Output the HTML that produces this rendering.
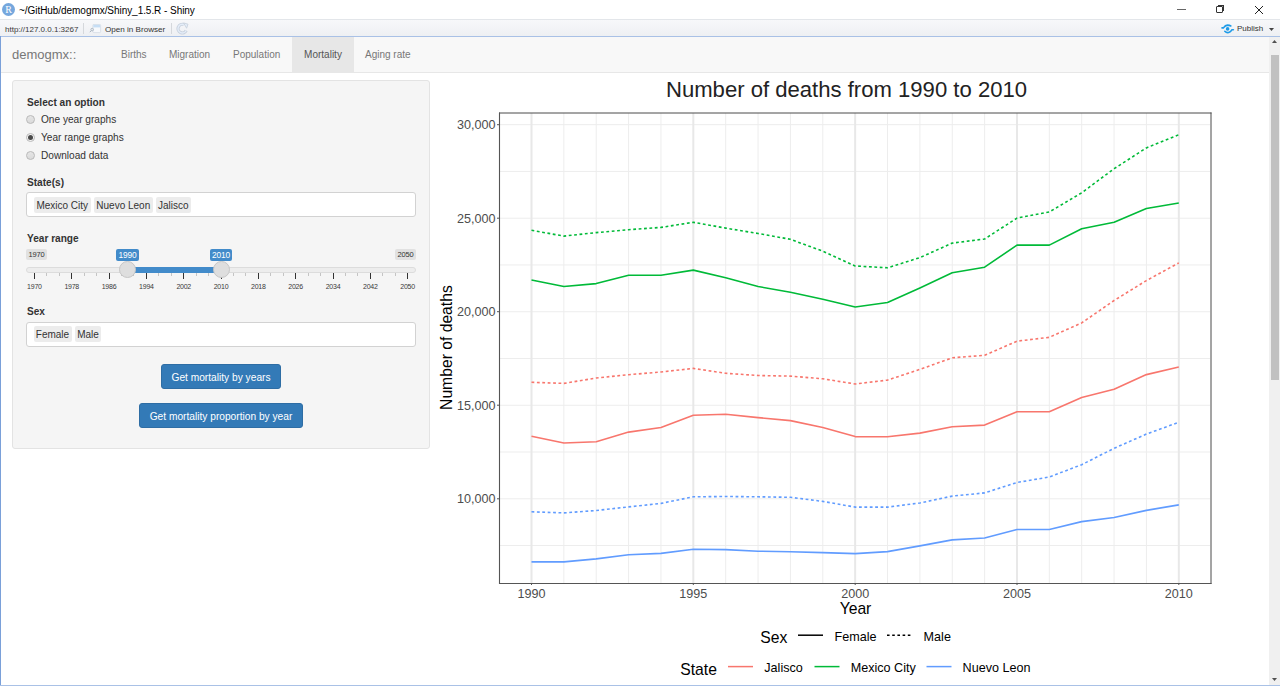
<!DOCTYPE html>
<html><head><meta charset="utf-8">
<style>
*{margin:0;padding:0;box-sizing:border-box}
html,body{width:1280px;height:686px;overflow:hidden;background:#fff;font-family:"Liberation Sans",sans-serif;color:#333}
.a{position:absolute;white-space:nowrap}
#titlebar{position:absolute;left:0;top:0;width:1280px;height:19px;background:#fff}
#toolbar{position:absolute;left:0;top:19px;width:1280px;height:17px;background:linear-gradient(#f7f8fa,#eef0f3);border-top:1px solid #e3e6ea}
#blueline{position:absolute;left:0;top:36px;width:1280px;height:1px;background:#a9c1e6}
#leftline{position:absolute;left:0;top:36px;width:1px;height:650px;background:#7aa0d9}
#bottomline{position:absolute;left:0;top:685px;width:1280px;height:1px;background:#a9c1e6}
#navbar{position:absolute;left:1px;top:37px;width:1269px;height:36px;background:#f8f8f8;border-bottom:1px solid #e7e7e7}
.nav{position:absolute;top:0;height:35px;font-size:10px;color:#777;line-height:35px}
#well{position:absolute;left:12px;top:80px;width:418px;height:369px;background:#f5f5f5;border:1px solid #e3e3e3;border-radius:3px}
.lbl{position:absolute;font-size:10.1px;font-weight:bold;color:#333}
.radio{position:absolute;width:9px;height:9px;border-radius:50%;border:1px solid #b9b9b9;background:linear-gradient(#e6e6e6,#dadada)}
.rtxt{position:absolute;font-size:10.1px;color:#333}
.inp{position:absolute;background:#fff;border:1px solid #d2d2d2;border-radius:3px}
.chip{position:absolute;background:#ececec;border-radius:2px;font-size:10px;color:#333;line-height:17px;height:16px;padding:0;text-align:center;overflow:visible}
.btn{position:absolute;background:#337ab7;border:1px solid #2e6da4;border-radius:3px;color:#fff;font-size:10.2px;text-align:center}
#scroll{position:absolute;left:1269px;top:37px;width:11px;height:648px;background:#f0f0f0}
#thumb{position:absolute;left:1271px;top:55px;width:8px;height:325px;background:#c1c1c1}
.tick{position:absolute;width:1px;background:#333}
.mtick{position:absolute;width:1px;background:#c4c4c4}
.glab{position:absolute;font-size:7px;letter-spacing:-0.25px;color:#3a3a3a;text-align:center;width:30px;line-height:9px}
</style></head><body>
<div id="titlebar">
  <div class="a" style="left:2px;top:3px;width:13px;height:13px;border-radius:50%;background:#75a7dd;color:#fff;font-family:'Liberation Serif',serif;font-size:10px;line-height:13px;text-align:center">R</div>
  <div class="a" style="left:19px;top:4px;font-size:10px;letter-spacing:-0.05px;color:#000;line-height:13px">~/GitHub/demogmx/Shiny_1.5.R - Shiny</div>
  <div class="a" style="left:1177px;top:8.5px;width:9px;height:1px;background:#666"></div>
  <div class="a" style="left:1216px;top:6px;width:7px;height:7px;border:1px solid #333;border-radius:1px"></div>
  <div class="a" style="left:1218px;top:5px;width:6px;height:6px;border-top:1px solid #333;border-right:1px solid #333"></div>
  <svg class="a" style="left:1254px;top:5px" width="10" height="10"><path d="M1 1L9 9M9 1L1 9" stroke="#222" stroke-width="1"/></svg>
</div>
<div id="toolbar">
  <div class="a" style="left:5px;top:5px;font-size:8px;color:#3a3a3a;line-height:10px">http://127.0.0.1:3267</div>
  <div class="a" style="left:83px;top:3px;width:1px;height:11px;background:#d5d8dc"></div>
  <svg class="a" style="left:89px;top:4px" width="13" height="11"><rect x="3.9" y="0.4" width="7.7" height="8.2" rx="1" fill="#f7f9fc" stroke="#d3dae3" stroke-width="0.8"/><rect x="4.3" y="0.8" width="6.9" height="2.6" fill="#c6def5"/><circle cx="3.2" cy="5.6" r="1.3" fill="none" stroke="#a9b4c0" stroke-width="0.9"/><path d="M2.3 6.6 L0.8 8.2" stroke="#a9b4c0" stroke-width="1"/></svg>
  <div class="a" style="left:105px;top:5px;font-size:8.1px;color:#333;line-height:10px">Open in Browser</div>
  <div class="a" style="left:171px;top:3px;width:1px;height:11px;background:#d5d8dc"></div>
  <svg class="a" style="left:176px;top:2px" width="14" height="14"><path d="M7.8 2.6 A4.3 4.3 0 1 0 10.2 8.5" fill="none" stroke="#c9d2de" stroke-width="3.2"/><path d="M7.8 2.6 A4.3 4.3 0 1 0 10.2 8.5" fill="none" stroke="#e4edf9" stroke-width="1.4"/><path d="M7.6 0.9 L12 2.2 L10.6 6.2 Z" fill="#e4edf9" stroke="#c9d2de" stroke-width="0.9"/></svg>
  <svg class="a" style="left:1221px;top:2px" width="14" height="14"><path d="M1 5.9 H2.4 Q4.3 3.2 6.5 3.1 Q8.6 3.1 9.8 4" fill="none" stroke="#1e9be8" stroke-width="1.6" stroke-linecap="round"/><path d="M3.8 9.3 Q5.5 11 7.6 10.5 Q9.6 9.9 10.9 7.8 H12.4" fill="none" stroke="#1e9be8" stroke-width="1.6" stroke-linecap="round"/><circle cx="6.6" cy="6.9" r="1.8" fill="#1e9be8"/></svg>
  <div class="a" style="left:1237px;top:4px;font-size:8px;color:#333;line-height:10px">Publish</div>
  <svg class="a" style="left:1269px;top:8px" width="6" height="4"><path d="M0 0H5L2.5 3Z" fill="#444"/></svg>
</div>
<div id="blueline"></div>
<div id="navbar">
  <div class="nav" style="left:11px;font-size:13px">demogmx::</div>
  <div class="nav" style="left:120px">Births</div>
  <div class="nav" style="left:168px">Migration</div>
  <div class="nav" style="left:232px">Population</div>
  <div class="nav" style="left:291px;width:62px;background:#e7e7e7;color:#555;text-align:center">Mortality</div>
  <div class="nav" style="left:364px">Aging rate</div>
</div>
<div id="leftline"></div>

<div id="well"></div>
<div class="lbl" style="left:27px;top:97px">Select an option</div>
<div class="radio" style="left:26px;top:115px"></div>
<div class="rtxt" style="left:41px;top:114px">One year graphs</div>
<div class="radio" style="left:26px;top:133px;background:#f4f4f4"></div>
<div class="a" style="left:28px;top:135px;width:5px;height:5px;border-radius:50%;background:#4a4a4a"></div>
<div class="rtxt" style="left:41px;top:132px">Year range graphs</div>
<div class="radio" style="left:26px;top:151px"></div>
<div class="rtxt" style="left:41px;top:150px">Download data</div>

<div class="lbl" style="left:27px;top:177px">State(s)</div>
<div class="inp" style="left:26px;top:192px;width:390px;height:25px"></div>
<div class="chip" style="left:33.5px;top:196.5px;width:57.5px">Mexico City</div>
<div class="chip" style="left:93.5px;top:196.5px;width:59.5px">Nuevo Leon</div>
<div class="chip" style="left:155.5px;top:196.5px;width:35.5px">Jalisco</div>

<div class="lbl" style="left:27px;top:233px">Year range</div>
<!-- slider -->
<div class="a" style="left:26px;top:249px;width:21px;height:11px;background:#e1e1e1;border-radius:2px;font-size:7.5px;letter-spacing:-0.2px;line-height:11px;text-align:center;color:#333">1970</div>
<div class="a" style="left:395px;top:249px;width:21px;height:11px;background:#e1e1e1;border-radius:2px;font-size:7.5px;letter-spacing:-0.2px;line-height:11px;text-align:center;color:#333">2050</div>
<div class="a" style="left:26px;top:267px;width:390px;height:6px;background:#ededed;border:1px solid #dcdcdc;border-radius:3px"></div>
<div class="a" style="left:128px;top:267px;width:93px;height:6px;background:#428bca"></div>
<div class="a" style="left:116px;top:249px;width:23px;height:12px;background:#428bca;border-radius:2px;font-size:8.4px;letter-spacing:-0.2px;line-height:12px;text-align:center;color:#fff">1990</div>
<div class="a" style="left:210px;top:249px;width:22px;height:12px;background:#428bca;border-radius:2px;font-size:8.4px;letter-spacing:-0.2px;line-height:12px;text-align:center;color:#fff">2010</div>
<div class="tick" style="left:33.9px;top:273px;height:6px"></div>
<div class="glab" style="left:19.4px;top:282px">1970</div>
<div class="mtick" style="left:46.3px;top:273px;height:3px"></div>
<div class="mtick" style="left:58.8px;top:273px;height:3px"></div>
<div class="tick" style="left:71.2px;top:273px;height:6px"></div>
<div class="glab" style="left:56.7px;top:282px">1978</div>
<div class="mtick" style="left:83.7px;top:273px;height:3px"></div>
<div class="mtick" style="left:96.1px;top:273px;height:3px"></div>
<div class="tick" style="left:108.5px;top:273px;height:6px"></div>
<div class="glab" style="left:94.0px;top:282px">1986</div>
<div class="mtick" style="left:121.0px;top:273px;height:3px"></div>
<div class="mtick" style="left:133.4px;top:273px;height:3px"></div>
<div class="tick" style="left:145.9px;top:273px;height:6px"></div>
<div class="glab" style="left:131.4px;top:282px">1994</div>
<div class="mtick" style="left:158.3px;top:273px;height:3px"></div>
<div class="mtick" style="left:170.7px;top:273px;height:3px"></div>
<div class="tick" style="left:183.2px;top:273px;height:6px"></div>
<div class="glab" style="left:168.7px;top:282px">2002</div>
<div class="mtick" style="left:195.6px;top:273px;height:3px"></div>
<div class="mtick" style="left:208.1px;top:273px;height:3px"></div>
<div class="tick" style="left:220.5px;top:273px;height:6px"></div>
<div class="glab" style="left:206.0px;top:282px">2010</div>
<div class="mtick" style="left:232.9px;top:273px;height:3px"></div>
<div class="mtick" style="left:245.4px;top:273px;height:3px"></div>
<div class="tick" style="left:257.8px;top:273px;height:6px"></div>
<div class="glab" style="left:243.3px;top:282px">2018</div>
<div class="mtick" style="left:270.3px;top:273px;height:3px"></div>
<div class="mtick" style="left:282.7px;top:273px;height:3px"></div>
<div class="tick" style="left:295.1px;top:273px;height:6px"></div>
<div class="glab" style="left:280.6px;top:282px">2026</div>
<div class="mtick" style="left:307.6px;top:273px;height:3px"></div>
<div class="mtick" style="left:320.0px;top:273px;height:3px"></div>
<div class="tick" style="left:332.5px;top:273px;height:6px"></div>
<div class="glab" style="left:318.0px;top:282px">2034</div>
<div class="mtick" style="left:344.9px;top:273px;height:3px"></div>
<div class="mtick" style="left:357.3px;top:273px;height:3px"></div>
<div class="tick" style="left:369.8px;top:273px;height:6px"></div>
<div class="glab" style="left:355.3px;top:282px">2042</div>
<div class="mtick" style="left:382.2px;top:273px;height:3px"></div>
<div class="mtick" style="left:394.7px;top:273px;height:3px"></div>
<div class="tick" style="left:407.1px;top:273px;height:6px"></div>
<div class="glab" style="left:392.6px;top:282px">2050</div>
<div class="a" style="left:119px;top:261px;width:17px;height:17px;border-radius:50%;background:#dedede;border:1px solid #c6c6c6"></div>
<div class="a" style="left:213px;top:261px;width:17px;height:17px;border-radius:50%;background:#dedede;border:1px solid #c6c6c6"></div>

<div class="lbl" style="left:27px;top:306px">Sex</div>
<div class="inp" style="left:26px;top:322px;width:390px;height:25px"></div>
<div class="chip" style="left:33.5px;top:326px;width:38px">Female</div>
<div class="chip" style="left:75px;top:326px;width:26px">Male</div>

<div class="btn" style="left:161px;top:364px;width:120px;height:25px;line-height:25px">Get mortality by years</div>
<div class="btn" style="left:139px;top:403px;width:164px;height:25px;line-height:25px">Get mortality proportion by year</div>

<svg width="1280" height="686" style="position:absolute;left:0;top:0">
<rect x="500" y="113" width="711" height="470" fill="#fff"/>
<line x1="500" x2="1210" y1="545.54" y2="545.54" stroke="#EDEDED" stroke-width="1"/>
<line x1="500" x2="1210" y1="498.78" y2="498.78" stroke="#EDEDED" stroke-width="1"/>
<line x1="500" x2="1210" y1="452.01" y2="452.01" stroke="#EDEDED" stroke-width="1"/>
<line x1="500" x2="1210" y1="405.25" y2="405.25" stroke="#EDEDED" stroke-width="1"/>
<line x1="500" x2="1210" y1="358.49" y2="358.49" stroke="#EDEDED" stroke-width="1"/>
<line x1="500" x2="1210" y1="311.72" y2="311.72" stroke="#EDEDED" stroke-width="1"/>
<line x1="500" x2="1210" y1="264.96" y2="264.96" stroke="#EDEDED" stroke-width="1"/>
<line x1="500" x2="1210" y1="218.19" y2="218.19" stroke="#EDEDED" stroke-width="1"/>
<line x1="500" x2="1210" y1="171.43" y2="171.43" stroke="#EDEDED" stroke-width="1"/>
<line x1="500" x2="1210" y1="124.66" y2="124.66" stroke="#EDEDED" stroke-width="1"/>
<line x1="531.50" x2="531.50" y1="113" y2="583" stroke="#E8E8E8" stroke-width="2"/>
<line x1="563.87" x2="563.87" y1="113" y2="583" stroke="#EDEDED" stroke-width="1"/>
<line x1="596.23" x2="596.23" y1="113" y2="583" stroke="#EDEDED" stroke-width="1"/>
<line x1="628.60" x2="628.60" y1="113" y2="583" stroke="#EDEDED" stroke-width="1"/>
<line x1="660.96" x2="660.96" y1="113" y2="583" stroke="#EDEDED" stroke-width="1"/>
<line x1="693.33" x2="693.33" y1="113" y2="583" stroke="#E8E8E8" stroke-width="2"/>
<line x1="725.69" x2="725.69" y1="113" y2="583" stroke="#EDEDED" stroke-width="1"/>
<line x1="758.06" x2="758.06" y1="113" y2="583" stroke="#EDEDED" stroke-width="1"/>
<line x1="790.42" x2="790.42" y1="113" y2="583" stroke="#EDEDED" stroke-width="1"/>
<line x1="822.79" x2="822.79" y1="113" y2="583" stroke="#EDEDED" stroke-width="1"/>
<line x1="855.15" x2="855.15" y1="113" y2="583" stroke="#E8E8E8" stroke-width="2"/>
<line x1="887.52" x2="887.52" y1="113" y2="583" stroke="#EDEDED" stroke-width="1"/>
<line x1="919.88" x2="919.88" y1="113" y2="583" stroke="#EDEDED" stroke-width="1"/>
<line x1="952.25" x2="952.25" y1="113" y2="583" stroke="#EDEDED" stroke-width="1"/>
<line x1="984.61" x2="984.61" y1="113" y2="583" stroke="#EDEDED" stroke-width="1"/>
<line x1="1016.98" x2="1016.98" y1="113" y2="583" stroke="#E8E8E8" stroke-width="2"/>
<line x1="1049.34" x2="1049.34" y1="113" y2="583" stroke="#EDEDED" stroke-width="1"/>
<line x1="1081.70" x2="1081.70" y1="113" y2="583" stroke="#EDEDED" stroke-width="1"/>
<line x1="1114.07" x2="1114.07" y1="113" y2="583" stroke="#EDEDED" stroke-width="1"/>
<line x1="1146.43" x2="1146.43" y1="113" y2="583" stroke="#EDEDED" stroke-width="1"/>
<line x1="1178.80" x2="1178.80" y1="113" y2="583" stroke="#E8E8E8" stroke-width="2"/>
<polyline points="531.5,230.3 563.9,236.1 596.2,232.6 628.6,229.7 661.0,227.4 693.3,222.3 725.7,228.1 758.1,233.5 790.4,239.3 822.8,251.2 855.2,266.0 887.5,267.8 919.9,257.6 952.2,243.1 984.6,239.0 1017.0,218.1 1049.3,212.0 1081.7,192.8 1114.1,168.7 1146.4,147.9 1178.8,134.7" fill="none" stroke="#00BA38" stroke-width="1.6" stroke-linejoin="round" stroke-dasharray="2.8 2.6"/>
<polyline points="531.5,280.0 563.9,286.5 596.2,283.6 628.6,275.2 661.0,275.2 693.3,270.1 725.7,277.8 758.1,286.5 790.4,292.2 822.8,299.3 855.2,307.0 887.5,302.5 919.9,288.0 952.2,272.7 984.6,267.2 1017.0,245.1 1049.3,245.1 1081.7,228.7 1114.1,222.3 1146.4,208.5 1178.8,203.0" fill="none" stroke="#00BA38" stroke-width="1.6" stroke-linejoin="round"/>
<polyline points="531.5,382.3 563.9,383.4 596.2,378.0 628.6,374.7 661.0,372.0 693.3,368.4 725.7,373.3 758.1,375.5 790.4,376.1 822.8,378.8 855.2,384.0 887.5,380.1 919.9,369.4 952.2,357.8 984.6,355.3 1017.0,341.2 1049.3,337.3 1081.7,322.9 1114.1,300.5 1146.4,280.6 1178.8,262.9" fill="none" stroke="#F8766D" stroke-width="1.6" stroke-linejoin="round" stroke-dasharray="2.8 2.6"/>
<polyline points="531.5,436.2 563.9,443.0 596.2,441.7 628.6,432.1 661.0,427.5 693.3,415.2 725.7,414.3 758.1,417.6 790.4,420.6 822.8,427.5 855.2,436.6 887.5,436.8 919.9,433.1 952.2,426.7 984.6,425.1 1017.0,411.7 1049.3,411.7 1081.7,397.6 1114.1,389.3 1146.4,374.6 1178.8,367.0" fill="none" stroke="#F8766D" stroke-width="1.6" stroke-linejoin="round"/>
<polyline points="531.5,511.8 563.9,512.9 596.2,510.5 628.6,506.9 661.0,503.4 693.3,496.8 725.7,496.5 758.1,496.8 790.4,497.3 822.8,501.4 855.2,507.1 887.5,507.1 919.9,503.0 952.2,496.1 984.6,492.9 1017.0,482.5 1049.3,477.0 1081.7,464.7 1114.1,448.3 1146.4,434.1 1178.8,422.3" fill="none" stroke="#619CFF" stroke-width="1.6" stroke-linejoin="round" stroke-dasharray="2.8 2.6"/>
<polyline points="531.5,561.9 563.9,561.9 596.2,558.9 628.6,554.8 661.0,553.4 693.3,549.3 725.7,549.6 758.1,551.2 790.4,551.8 822.8,552.6 855.2,553.6 887.5,551.6 919.9,545.9 952.2,539.9 984.6,538.0 1017.0,529.5 1049.3,529.5 1081.7,521.6 1114.1,517.5 1146.4,510.4 1178.8,504.9" fill="none" stroke="#619CFF" stroke-width="1.6" stroke-linejoin="round"/>
<line x1="499" x2="1211.5" y1="113" y2="113" stroke="#4a4a4a" stroke-width="1"/>
<line x1="1211" x2="1211" y1="112.5" y2="584" stroke="#4a4a4a" stroke-width="1"/>
<line x1="499.5" x2="499.5" y1="112.5" y2="584" stroke="#555" stroke-width="1.1"/>
<line x1="499" x2="1211.5" y1="583.5" y2="583.5" stroke="#555" stroke-width="1.1"/>
<line x1="497" x2="500" y1="498.8" y2="498.8" stroke="#555" stroke-width="1"/>
<text x="495.5" y="503.4" text-anchor="end" font-family="Liberation Sans" font-size="12.6" fill="#4D4D4D">10,000</text>
<line x1="497" x2="500" y1="405.2" y2="405.2" stroke="#555" stroke-width="1"/>
<text x="495.5" y="409.9" text-anchor="end" font-family="Liberation Sans" font-size="12.6" fill="#4D4D4D">15,000</text>
<line x1="497" x2="500" y1="311.7" y2="311.7" stroke="#555" stroke-width="1"/>
<text x="495.5" y="316.3" text-anchor="end" font-family="Liberation Sans" font-size="12.6" fill="#4D4D4D">20,000</text>
<line x1="497" x2="500" y1="218.2" y2="218.2" stroke="#555" stroke-width="1"/>
<text x="495.5" y="222.8" text-anchor="end" font-family="Liberation Sans" font-size="12.6" fill="#4D4D4D">25,000</text>
<line x1="497" x2="500" y1="124.7" y2="124.7" stroke="#555" stroke-width="1"/>
<text x="495.5" y="129.3" text-anchor="end" font-family="Liberation Sans" font-size="12.6" fill="#4D4D4D">30,000</text>
<line x1="531.5" x2="531.5" y1="583" y2="585" stroke="#555" stroke-width="1"/>
<text x="531.5" y="598" text-anchor="middle" font-family="Liberation Sans" font-size="12.6" fill="#4D4D4D">1990</text>
<line x1="693.3" x2="693.3" y1="583" y2="585" stroke="#555" stroke-width="1"/>
<text x="693.3" y="598" text-anchor="middle" font-family="Liberation Sans" font-size="12.6" fill="#4D4D4D">1995</text>
<line x1="855.2" x2="855.2" y1="583" y2="585" stroke="#555" stroke-width="1"/>
<text x="855.2" y="598" text-anchor="middle" font-family="Liberation Sans" font-size="12.6" fill="#4D4D4D">2000</text>
<line x1="1017.0" x2="1017.0" y1="583" y2="585" stroke="#555" stroke-width="1"/>
<text x="1017.0" y="598" text-anchor="middle" font-family="Liberation Sans" font-size="12.6" fill="#4D4D4D">2005</text>
<line x1="1178.8" x2="1178.8" y1="583" y2="585" stroke="#555" stroke-width="1"/>
<text x="1178.8" y="598" text-anchor="middle" font-family="Liberation Sans" font-size="12.6" fill="#4D4D4D">2010</text>
<text x="846.5" y="96.6" text-anchor="middle" font-family="Liberation Sans" font-size="22.1" fill="#222">Number of deaths from 1990 to 2010</text>
<text x="855.5" y="614" text-anchor="middle" font-family="Liberation Sans" font-size="15.7" fill="#000">Year</text>
<text transform="translate(451.9,347.6) rotate(-90)" text-anchor="middle" font-family="Liberation Sans" font-size="15.7" fill="#000">Number of deaths</text>
<text x="760.3" y="643.4" font-family="Liberation Sans" font-size="15.7" fill="#000">Sex</text>
<line x1="798" x2="823" y1="635.2" y2="635.2" stroke="#000" stroke-width="1.5"/>
<text x="834.6" y="640.7" font-family="Liberation Sans" font-size="12.6" fill="#000">Female</text>
<line x1="887" x2="912" y1="635.2" y2="635.2" stroke="#000" stroke-width="1.5" stroke-dasharray="2.6 2.6"/>
<text x="923.6" y="640.7" font-family="Liberation Sans" font-size="12.6" fill="#000">Male</text>
<text x="680.3" y="675.3" font-family="Liberation Sans" font-size="15.7" fill="#000">State</text>
<line x1="728" x2="753" y1="666.6" y2="666.6" stroke="#F8766D" stroke-width="1.5"/>
<text x="764.3" y="671.7" font-family="Liberation Sans" font-size="12.6" fill="#000">Jalisco</text>
<line x1="814.5" x2="839.5" y1="666.6" y2="666.6" stroke="#00BA38" stroke-width="1.5"/>
<text x="850.7" y="671.7" font-family="Liberation Sans" font-size="12.6" fill="#000">Mexico City</text>
<line x1="926.5" x2="951.5" y1="666.6" y2="666.6" stroke="#619CFF" stroke-width="1.5"/>
<text x="962.6" y="671.7" font-family="Liberation Sans" font-size="12.6" fill="#000">Nuevo Leon</text>
</svg>

<div id="scroll"></div>
<div id="thumb"></div>
<svg class="a" style="left:1272px;top:40px" width="6" height="4"><path d="M0 3H5L2.5 0Z" fill="#505050"/></svg>
<svg class="a" style="left:1272px;top:678px" width="6" height="4"><path d="M0 0H5L2.5 3Z" fill="#505050"/></svg>
<div id="bottomline"></div>
</body></html>
